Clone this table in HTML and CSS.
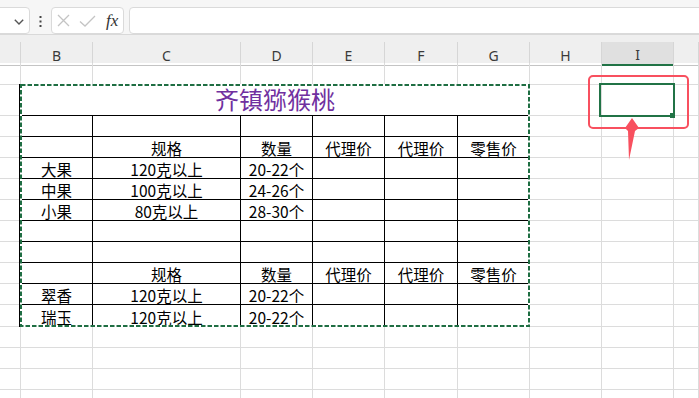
FILE: index.html
```
<!DOCTYPE html>
<html lang="zh-CN">
<head>
<meta charset="utf-8">
<title>齐镇猕猴桃</title>
<link rel="stylesheet" href="styles.css">
</head>
<body>
<div class="toolbar">
  <div class="namebox">
    <svg class="chev" width="10" height="6" viewBox="0 0 10 6"><path d="M0.8 0.8 L5 5 L9.2 0.8" fill="none" stroke="#555" stroke-width="1.4"/></svg>
  </div>
  <div class="dots">
    <svg width="3" height="11" viewBox="0 0 3 11"><rect x="0.5" y="0" width="2" height="2" fill="#444"/><rect x="0.5" y="4.5" width="2" height="2" fill="#444"/><rect x="0.5" y="9" width="2" height="2" fill="#444"/></svg>
  </div>
  <div class="fxbox">
    <svg width="13" height="13" viewBox="0 0 13 13"><path d="M1 1 L12 12 M12 1 L1 12" stroke="#c4c4c4" stroke-width="1.3" fill="none"/></svg>
    <svg class="ok" width="17" height="12" viewBox="0 0 17 12"><path d="M1 6.5 L6 11 L16 1" stroke="#c4c4c4" stroke-width="1.3" fill="none"/></svg>
    <span class="fx">fx</span>
  </div>
  <div class="formula"></div>
</div>
<div class="band"></div>
<div class="hdr">
  <div class="hc"></div>
  <div class="hc">B</div>
  <div class="hc">C</div>
  <div class="hc">D</div>
  <div class="hc">E</div>
  <div class="hc">F</div>
  <div class="hc">G</div>
  <div class="hc">H</div>
  <div class="hc sel">I</div>
  <div class="hc"></div>
</div>
<div class="grid">
  <!-- row 1 -->
  <div class="c"></div><div class="c"></div><div class="c"></div><div class="c"></div><div class="c"></div><div class="c"></div><div class="c"></div><div class="c"></div><div class="c"></div><div class="c"></div>
  <!-- row 2 -->
  <div class="c l"></div><div class="c t title">齐镇猕猴桃</div><div class="c"></div><div class="c"></div><div class="c"></div>
  <!-- row 3 -->
  <div class="c l"></div><div class="c t"></div><div class="c t"></div><div class="c t"></div><div class="c t"></div><div class="c t"></div><div class="c t"></div><div class="c"></div><div class="c"></div><div class="c"></div>
  <!-- row 4 -->
  <div class="c l"></div><div class="c t"></div><div class="c t">规格</div><div class="c t">数量</div><div class="c t">代理价</div><div class="c t">代理价</div><div class="c t">零售价</div><div class="c"></div><div class="c"></div><div class="c"></div>
  <!-- row 5 -->
  <div class="c l"></div><div class="c t">大果</div><div class="c t">120克以上</div><div class="c t">20-22个</div><div class="c t"></div><div class="c t"></div><div class="c t"></div><div class="c"></div><div class="c"></div><div class="c"></div>
  <!-- row 6 -->
  <div class="c l"></div><div class="c t">中果</div><div class="c t">100克以上</div><div class="c t">24-26个</div><div class="c t"></div><div class="c t"></div><div class="c t"></div><div class="c"></div><div class="c"></div><div class="c"></div>
  <!-- row 7 -->
  <div class="c l"></div><div class="c t">小果</div><div class="c t">80克以上</div><div class="c t">28-30个</div><div class="c t"></div><div class="c t"></div><div class="c t"></div><div class="c"></div><div class="c"></div><div class="c"></div>
  <!-- row 8 -->
  <div class="c l"></div><div class="c t"></div><div class="c t"></div><div class="c t"></div><div class="c t"></div><div class="c t"></div><div class="c t"></div><div class="c"></div><div class="c"></div><div class="c"></div>
  <!-- row 9 -->
  <div class="c l"></div><div class="c t"></div><div class="c t"></div><div class="c t"></div><div class="c t"></div><div class="c t"></div><div class="c t"></div><div class="c"></div><div class="c"></div><div class="c"></div>
  <!-- row 10 -->
  <div class="c l"></div><div class="c t"></div><div class="c t">规格</div><div class="c t">数量</div><div class="c t">代理价</div><div class="c t">代理价</div><div class="c t">零售价</div><div class="c"></div><div class="c"></div><div class="c"></div>
  <!-- row 11 -->
  <div class="c l"></div><div class="c t">翠香</div><div class="c t">120克以上</div><div class="c t">20-22个</div><div class="c t"></div><div class="c t"></div><div class="c t"></div><div class="c"></div><div class="c"></div><div class="c"></div>
  <!-- row 12 -->
  <div class="c l"></div><div class="c t">瑞玉</div><div class="c t">120克以上</div><div class="c t">20-22个</div><div class="c t"></div><div class="c t"></div><div class="c t"></div><div class="c"></div><div class="c"></div><div class="c"></div>
  <!-- rows 13-16 -->
  <div class="c"></div><div class="c"></div><div class="c"></div><div class="c"></div><div class="c"></div><div class="c"></div><div class="c"></div><div class="c"></div><div class="c"></div><div class="c"></div>
  <div class="c"></div><div class="c"></div><div class="c"></div><div class="c"></div><div class="c"></div><div class="c"></div><div class="c"></div><div class="c"></div><div class="c"></div><div class="c"></div>
  <div class="c"></div><div class="c"></div><div class="c"></div><div class="c"></div><div class="c"></div><div class="c"></div><div class="c"></div><div class="c"></div><div class="c"></div><div class="c"></div>
  <div class="c"></div><div class="c"></div><div class="c"></div><div class="c"></div><div class="c"></div><div class="c"></div><div class="c"></div><div class="c"></div><div class="c"></div><div class="c"></div>
</div>

<svg class="ants" width="511" height="243" viewBox="0 0 511 243">
  <line x1="0.5" y1="0" x2="0.5" y2="243" stroke="#000" stroke-width="1"/>
  <rect x="2" y="1" width="508" height="241" fill="none" stroke="#fff" stroke-width="2"/>
  <rect x="2" y="1" width="508" height="241" fill="none" stroke="#1f6e43" stroke-width="2" stroke-dasharray="4.5 2"/>
</svg>

<div class="selcell"></div>
<div class="handle"></div>

<svg class="callout" width="106" height="90" viewBox="0 0 106 90">
  <rect x="3" y="3" width="99" height="52" rx="4" ry="4" fill="none" stroke="#f8505f" stroke-width="2"/>
  <polygon points="46,45 53,55 49,58 43,87 42,58 39,55" fill="#f8505f"/>
</svg>
</body>
</html>
```
FILE: styles.css
```
* { box-sizing: border-box; }

body {
  margin: 0;
  width: 699px;
  height: 398px;
  overflow: hidden;
  background: #fff;
  position: relative;
  font-family: "Noto Sans CJK SC", "Noto Sans", sans-serif;
}

.toolbar {
  height: 34px;
  background: #f6f6f6;
  display: flex;
  align-items: flex-start;
  padding-top: 7px;
}

.namebox {
  margin-left: -10px;
  width: 40px;
  height: 27px;
  background: #fff;
  border: 1px solid #dadada;
  border-radius: 4px;
  display: flex;
  align-items: center;
  justify-content: flex-end;
  padding-right: 5px;
}

.chev { margin-top: 3px; }

.dots {
  width: 21px;
  height: 27px;
  display: flex;
  align-items: center;
  justify-content: center;
  padding-top: 1px;
}

.fxbox {
  width: 73px;
  height: 27px;
  background: #fff;
  border: 1px solid #dadada;
  border-radius: 4px;
  display: flex;
  align-items: center;
  padding-left: 5px;
}

.fxbox .ok { margin-left: 9px; }

.fx {
  margin-left: 10px;
  font-family: "Liberation Serif", "DejaVu Serif", serif;
  font-style: italic;
  font-size: 17px;
  color: #333;
  line-height: 1;
}

.formula {
  flex: 1;
  margin-left: 5px;
  margin-right: -10px;
  height: 27px;
  background: #fff;
  border: 1px solid #dadada;
  border-radius: 4px;
}

.band {
  height: 8px;
  background: #efefef;
  border-top: 1px solid #d9d9d9;
}

.hdr,
.grid {
  display: grid;
  grid-template-columns: 21px 72px 148px 72px 72px 73px 72px 72px 72px 25px;
}

.hdr {
  height: 21px;
  background: #efefef;
}

.hc {
  border-right: 1px solid #d6d6d6;
  border-bottom: 1px solid #c4c4c4;
  display: flex;
  align-items: center;
  justify-content: center;
  padding-top: 3px;
  font-family: "Noto Sans", "Liberation Sans", sans-serif;
  font-size: 14px;
  color: #3a3a3a;
}

.hc.sel {
  background: #e0e0e0;
  border-bottom: 2px solid #217346;
}

.grid {
  grid-template-rows: 22px 31px repeat(9, 21px) 22px repeat(4, 21px);
}

.c {
  border-right: 1px solid #dcdcdc;
  border-bottom: 1px solid #dcdcdc;
  display: flex;
  align-items: flex-end;
  justify-content: center;
  font-size: 15.5px;
  line-height: 18px;
  color: #000;
  white-space: nowrap;
}

.c.t {
  border-color: #000;
}

.c.l {
  border-right-color: #000;
}

.c.title {
  grid-column: span 6;
  font-size: 24px;
  line-height: 28px;
  padding-bottom: 2px;
  color: #7030a0;
}

.ants {
  position: absolute;
  left: 19px;
  top: 84px;
}

.selcell {
  position: absolute;
  left: 599px;
  top: 83px;
  width: 76px;
  height: 34px;
  border: 2px solid #217346;
}

.handle {
  position: absolute;
  left: 670px;
  top: 113px;
  width: 5px;
  height: 5px;
  background: #217346;
}

.callout {
  position: absolute;
  left: 586px;
  top: 73px;
}
```
